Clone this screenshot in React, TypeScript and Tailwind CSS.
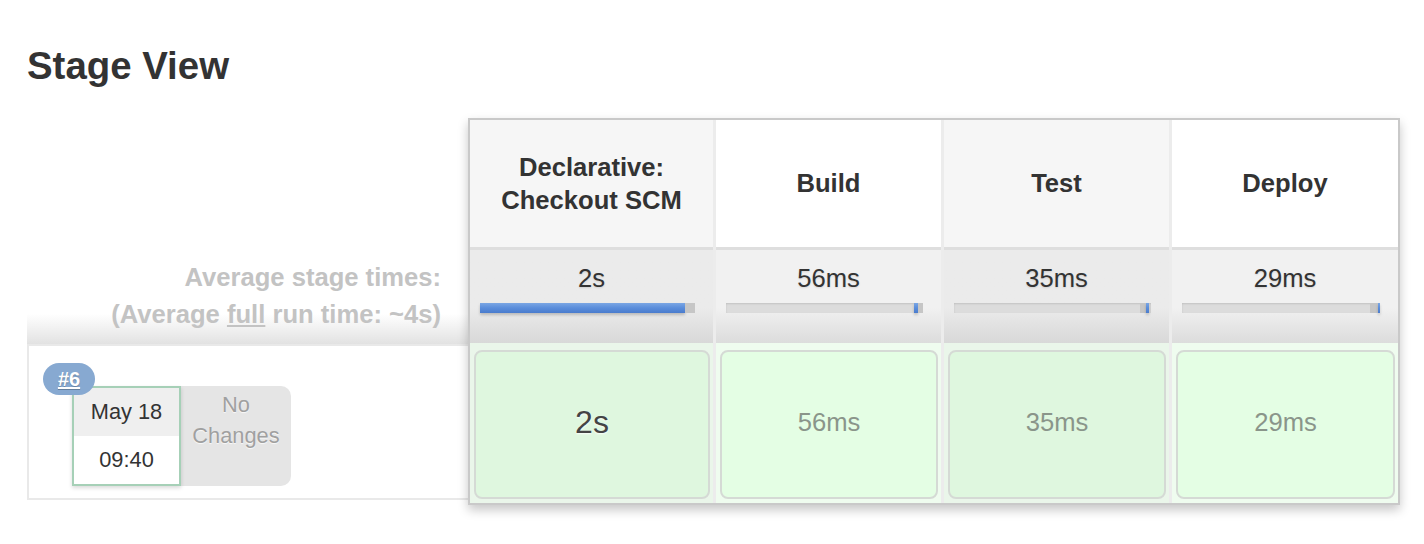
import React from "react";

type Seg = { kind: "space" | "blue" | "dark"; w?: number };
type Stage = {
  name: string[];
  avg: string;
  cell: string;
  odd: boolean;
  segs: Seg[];
  latest?: boolean;
};

const stages: Stage[] = [
  {
    name: ["Declarative:", "Checkout SCM"],
    avg: "2s",
    cell: "2s",
    odd: true,
    latest: true,
    segs: [{ kind: "blue", w: 205 }, { kind: "dark" }],
  },
  {
    name: ["Build"],
    avg: "56ms",
    cell: "56ms",
    odd: false,
    segs: [{ kind: "space" }, { kind: "blue", w: 4 }, { kind: "dark", w: 5 }],
  },
  {
    name: ["Test"],
    avg: "35ms",
    cell: "35ms",
    odd: true,
    segs: [
      { kind: "space" },
      { kind: "dark", w: 6 },
      { kind: "blue", w: 3 },
      { kind: "space", w: 2 },
    ],
  },
  {
    name: ["Deploy"],
    avg: "29ms",
    cell: "29ms",
    odd: false,
    segs: [{ kind: "space" }, { kind: "dark", w: 8 }, { kind: "blue", w: 2 }],
  },
];

function Bar({ segs }: { segs: Seg[] }) {
  return (
    <div className="mt-[10px] ml-[10px] mr-[18px] h-[10px] flex bg-[#dcdcdc] shadow-[inset_0_1px_2px_rgba(0,0,0,0.12)]">
      {segs.map((s, i) => {
        const grow = s.w === undefined;
        const style = grow ? undefined : { width: `${s.w}px` };
        if (s.kind === "space")
          return <div key={i} className={grow ? "flex-1" : "shrink-0"} style={style} />;
        if (s.kind === "blue")
          return (
            <div
              key={i}
              className={`${grow ? "flex-1" : "shrink-0"} bg-gradient-to-b from-[#7aa6e4] via-[#5a8ddb] to-[#4a7ccd] shadow-[0_2px_3px_rgba(0,0,0,0.2)]`}
              style={style}
            />
          );
        return (
          <div
            key={i}
            className={`${grow ? "flex-1" : "shrink-0"} bg-[#c6c6c6]`}
            style={style}
          />
        );
      })}
    </div>
  );
}

export default function App() {
  return (
    <div className="w-[1424px] h-[544px] overflow-hidden bg-white font-['Liberation_Sans',Arial,Helvetica,sans-serif] text-[#333]">
      <h2 className="pl-[27px] pt-[47px] text-[38.4px] font-bold leading-none text-[#333]">
        Stage View
      </h2>

      <div className="mt-[33px] flex pl-[27px]">
        {/* left column */}
        <div className="w-[441px] shrink-0 flex flex-col">
          <div className="h-[132px]" />
          <div className="h-[94px] bg-gradient-to-b from-white from-[68%] to-[#e2e2e2] pr-[27px] pt-[9px] text-right text-[25.6px] font-bold leading-[37px] text-[#c3c3c3]">
            <div>Average stage times:</div>
            <div>
              (Average <span className="underline">full</span> run time: ~4s)
            </div>
          </div>
          <div className="relative h-[156px] w-[443px] border-2 border-r-0 border-[#e9e9e9] bg-white">
            <div className="absolute left-[14px] top-[17px] z-10 flex h-[32px] w-[52px] items-center justify-center rounded-full bg-[#87a9d1] text-[20px] font-bold text-white underline [text-shadow:0_1px_1px_rgba(0,0,0,0.25)]">
              #6
            </div>
            <div className="flex pl-[43px] pt-[40px]">
              <div className="relative z-[1] flex h-[100px] w-[109px] flex-col border-2 border-[#a6d0b7] bg-white text-[21.8px] text-[#333] shadow-[0_2px_4px_rgba(0,0,0,0.15)]">
                <div className="flex h-[48px] items-center justify-center bg-[#efefef]">
                  May 18
                </div>
                <div className="flex flex-1 items-center justify-center">09:40</div>
              </div>
              <div className="flex h-[100px] w-[110px] flex-col items-center rounded-r-[10px] bg-[#e5e5e5] pt-[3px] text-[21.8px] leading-[31px] text-[#a0a0a0] [text-shadow:0_1px_1px_rgba(255,255,255,0.8)]">
                <div>No</div>
                <div>Changes</div>
              </div>
            </div>
          </div>
        </div>

        {/* stage table */}
        <div className="relative z-20 h-[387px] w-[932px] shrink-0 border-2 border-[#c9c9c9] bg-[#ececec] shadow-[0_5px_10px_rgba(0,0,0,0.22)]">
          <div className="grid grid-cols-[243px_225px_225px_226px] grid-rows-[127px_96px_160px] gap-x-[3px]">
            {stages.map((s) => (
              <div
                key={"h" + s.avg}
                className={`flex flex-col items-center justify-center text-center text-[25.6px] font-bold leading-[33px] text-[#333] ${
                  s.odd ? "bg-[#f6f6f6]" : "bg-white"
                }`}
              >
                {s.name.map((n) => (
                  <div key={n}>{n}</div>
                ))}
              </div>
            ))}
            {stages.map((s) => (
              <div
                key={"a" + s.avg}
                className={`border-t-[3px] border-[#dedede] pt-[13px] ${
                  s.odd
                    ? "bg-gradient-to-b from-[#ebebeb] from-[62%] to-[#d8d8d8]"
                    : "bg-gradient-to-b from-[#f1f1f1] from-[62%] to-[#dcdcdc]"
                }`}
              >
                <div className="text-center text-[25.6px] leading-[30px] text-[#333] [text-shadow:0_1px_2px_rgba(0,0,0,0.12)]">
                  {s.avg}
                </div>
                <Bar segs={s.segs} />
              </div>
            ))}
            {stages.map((s) => (
              <div
                key={"c" + s.avg}
                className={`pb-[4px] pl-[4px] pr-[3px] pt-[7px] ${
                  s.odd ? "bg-[#eaf6ea]" : "bg-[#effcef]"
                }`}
              >
                <div
                  className={`flex h-full items-center justify-center rounded-[8px] border-2 border-[#d5dad5] ${
                    s.odd ? "bg-[#dff7df]" : "bg-[#e4fee4]"
                  } ${
                    s.latest
                      ? "text-[32px] text-[#444] [text-shadow:0_1px_2px_rgba(255,255,255,0.9)]"
                      : "text-[25.6px] text-[#8a958a]"
                  }`}
                >
                  <span className="-mt-[5px]">{s.cell}</span>
                </div>
              </div>
            ))}
          </div>
        </div>
      </div>
    </div>
  );
}
